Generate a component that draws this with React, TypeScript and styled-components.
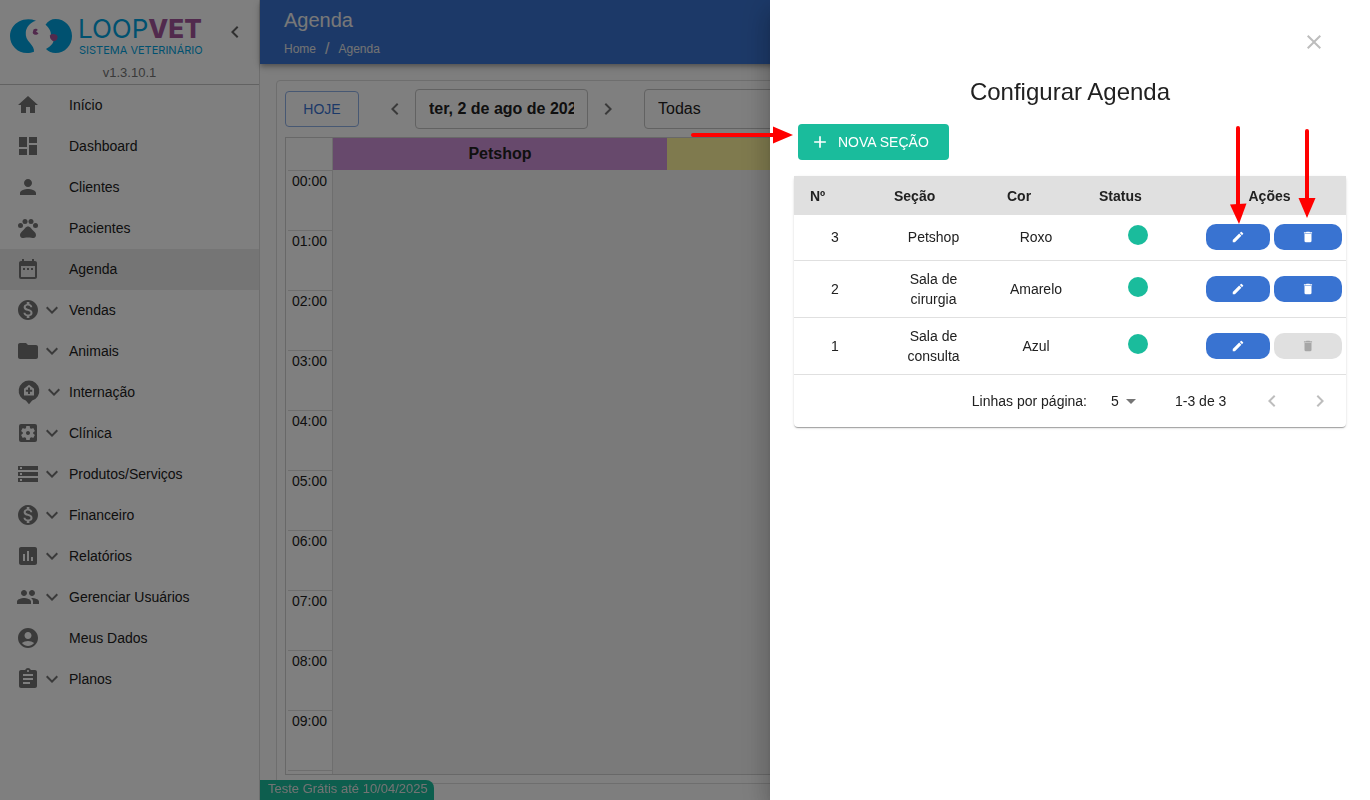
import React from 'react';
import styled, { createGlobalStyle } from 'styled-components';
import type { IconType } from 'react-icons';
import {
  MdAccountCircle,
  MdAdd,
  MdArrowDropDown,
  MdAssessment,
  MdAssignment,
  MdChevronLeft,
  MdChevronRight,
  MdClose,
  MdDashboard,
  MdDateRange,
  MdDelete,
  MdEdit,
  MdExpandMore,
  MdFolder,
  MdHome,
  MdMonetizationOn,
  MdPeople,
  MdPerson,
  MdPets,
  MdSettingsApplications,
  MdStorage,
} from 'react-icons/md';

const GlobalStyle = createGlobalStyle`
  * { box-sizing: border-box; }
  body {
    margin: 0;
    background: #fcfcfc;
    color: #212121;
    font-family: "Liberation Sans", Arial, sans-serif;
    font-size: 14px;
    line-height: 20px;
  }
  button, input, select { font: inherit; color: inherit; }
  button { border: 0; padding: 0; background: none; cursor: pointer; }
  a { color: inherit; text-decoration: none; }
  svg { display: block; flex-shrink: 0; }
`;

const Shell = styled.div`
  display: flex;
  height: 100vh;
  overflow: hidden;
`;

/* Sidebar */

const Sidebar = styled.aside`
  flex: 0 0 260px;
  background: #fff;
  border-right: 1px solid #dcdcdc;
`;

const Brand = styled.div`
  display: grid;
  grid-template-columns: 196px 1fr;
  grid-template-rows: 48px 16px;
  row-gap: 7px;
  align-items: start;
  height: 85px;
  padding: 10px 10px 0;
  border-bottom: 1px solid #c4c4c4;
`;

const CollapseButton = styled.button`
  display: grid;
  place-items: center;
  width: 28px;
  height: 44px;
  margin-left: 15px;
  color: #616161;
`;

const Version = styled.span`
  grid-column: 1 / -1;
  text-align: center;
  font-size: 13px;
  line-height: 16px;
  color: #757575;
`;

const NavLink = styled.a<{ $active?: boolean }>`
  display: flex;
  align-items: center;
  height: 41px;
  padding: 0 0 2px 16px;
  background: ${(p) => (p.$active ? '#ebebeb' : 'transparent')};
`;

const NavIcons = styled.span`
  display: flex;
  align-items: center;
  width: 53px;
  color: #757575;
`;

/* Main area */

const Main = styled.div`
  flex: 1;
  min-width: 0;
  display: flex;
  flex-direction: column;
`;

const AppBar = styled.header`
  height: 64px;
  padding: 8px 24px;
  background: #3973d1;
  color: #fff;
  box-shadow: 0 2px 4px -1px rgba(0, 0, 0, 0.2), 0 4px 5px rgba(0, 0, 0, 0.14),
    0 1px 10px rgba(0, 0, 0, 0.12);
`;

const AppTitle = styled.h1`
  margin: 0;
  font-size: 20px;
  font-weight: 400;
  line-height: 24px;
  color: #f0f0f0;
`;

const Breadcrumb = styled.nav`
  display: flex;
  align-items: center;
  gap: 9px;
  height: 33px;
  font-size: 12px;
  color: #e6e6e6;
`;

const Slash = styled.span`
  font-size: 16px;
`;

const Card = styled.section`
  flex: 1;
  min-height: 0;
  display: flex;
  flex-direction: column;
  gap: 8px;
  margin: 16px;
  padding: 8px;
  background: #fff;
  border: 1px solid #dcdcdc;
  border-radius: 4px;
`;

const Toolbar = styled.div`
  display: flex;
  align-items: center;
  height: 40px;
`;

const TodayButton = styled.button`
  width: 74px;
  height: 36px;
  margin-right: 16px;
  border: 1px solid #8fb0e6;
  border-radius: 4px;
  color: #3973d1;
`;

const StepButton = styled.button`
  display: grid;
  place-items: center;
  width: 40px;
  height: 40px;
  color: #757575;
`;

const DateInput = styled.input`
  width: 173px;
  height: 40px;
  padding: 0 13px;
  border: 1px solid #c4c4c4;
  border-radius: 4px;
  background: transparent;
  font-size: 16px;
  font-weight: 700;
`;

const RoomSelect = styled.select`
  appearance: none;
  width: 240px;
  height: 40px;
  margin-left: 16px;
  padding: 0 13px;
  border: 1px solid #c4c4c4;
  border-radius: 4px;
  background: transparent;
  font-size: 16px;
`;

const Calendar = styled.div`
  flex: 1;
  min-height: 0;
  overflow: hidden;
  display: grid;
  grid-template-columns: 47px repeat(3, 1fr);
  grid-template-rows: 32px 1fr;
  padding-right: 9px;
  border: 1px solid #d0d0d0;
`;

const RoomHead = styled.div<{ $tone: string }>`
  display: grid;
  place-items: center;
  background: ${(p) => p.$tone};
  font-size: 16px;
  font-weight: 700;
`;

const Corner = styled.div`
  border-right: 1px solid #dcdcdc;
`;

const Hours = styled.div`
  padding-left: 2px;
  border-right: 1px solid #dcdcdc;
`;

const Hour = styled.div`
  height: 60px;
  padding-right: 5px;
  border-top: 1px solid #dcdcdc;
  text-align: right;
`;

const Lane = styled.div`
  background: #f5f5f5;
`;

const TrialBadge = styled.div`
  position: fixed;
  left: 260px;
  bottom: 0;
  width: 174px;
  height: 20px;
  padding-left: 8px;
  border-radius: 0 8px 0 0;
  background: #1abc9c;
  color: #e6e6e6;
  font-size: 13px;
  line-height: 18px;
`;

/* Drawer */

const Backdrop = styled.div`
  position: fixed;
  inset: 0;
  background: rgba(0, 0, 0, 0.5);
`;

const Drawer = styled.div`
  position: fixed;
  top: 0;
  right: 0;
  bottom: 0;
  width: 600px;
  max-width: 100vw;
  display: flex;
  flex-direction: column;
  padding: 18px 24px 24px;
  background: #fff;
  box-shadow: 0 8px 10px -5px rgba(0, 0, 0, 0.2), 0 16px 24px 2px rgba(0, 0, 0, 0.14),
    0 6px 30px 5px rgba(0, 0, 0, 0.12);
`;

const CloseButton = styled.button`
  display: grid;
  place-items: center;
  align-self: flex-end;
  width: 48px;
  height: 48px;
  margin-right: 8px;
  color: #bdbdbd;
`;

const DrawerTitle = styled.h2`
  margin: 10px 0 16px;
  text-align: center;
  font-size: 24px;
  font-weight: 400;
  line-height: 32px;
`;

const NewButton = styled.button`
  display: flex;
  align-items: center;
  gap: 8px;
  width: 151px;
  height: 36px;
  margin: 0 0 16px 4px;
  padding-left: 12px;
  border-radius: 4px;
  background: #1abc9c;
  color: #fff;
`;

const Paper = styled.div`
  border-radius: 4px;
  background: #fff;
  box-shadow: 0 2px 1px -1px rgba(0, 0, 0, 0.2), 0 1px 1px rgba(0, 0, 0, 0.14),
    0 1px 3px rgba(0, 0, 0, 0.12);
`;

const Table = styled.table`
  width: 100%;
  table-layout: fixed;
  border-collapse: collapse;
`;

const Th = styled.th<{ $width?: number; $center?: boolean }>`
  width: ${(p) => (p.$width ? `${p.$width}px` : 'auto')};
  height: 39px;
  padding: 0 0 0 ${(p) => (p.$center ? 0 : 16)}px;
  background: #e0e0e0;
  text-align: ${(p) => (p.$center ? 'center' : 'left')};
`;

const Td = styled.td`
  height: 45px;
  padding: 8px 17px 8px 15px;
  border-bottom: 1px solid #e0e0e0;
  text-align: center;
`;

const StatusTd = styled(Td)`
  padding: 8px 16px;
`;

const ActionsTd = styled(Td)`
  padding: 0 4px 0 0;
`;

const StatusDot = styled.span`
  display: block;
  width: 20px;
  height: 20px;
  margin: 0 auto 4px;
  border-radius: 50%;
  background: #1abc9c;
`;

const Actions = styled.div`
  display: flex;
  justify-content: flex-end;
  gap: 4px;
`;

const ActionButton = styled.button<{ $wide?: boolean }>`
  display: grid;
  place-items: center;
  width: ${(p) => (p.$wide ? 68 : 64)}px;
  height: 26px;
  border-radius: 10px;
  background: #3973d1;
  color: #fff;
  &:disabled {
    background: #e0e0e0;
    color: #a6a6a6;
    cursor: default;
  }
`;

const Pagination = styled.div`
  display: flex;
  align-items: center;
  justify-content: flex-end;
  height: 52px;
  padding-right: 2px;
`;

const PageSize = styled.span`
  position: relative;
  display: flex;
  align-items: center;
  width: 40px;
  margin: 0 32px 0 16px;
  svg {
    position: absolute;
    right: 0;
    color: #757575;
    pointer-events: none;
  }
`;

const PageSizeSelect = styled.select`
  appearance: none;
  width: 100%;
  height: 24px;
  padding: 0 8px;
  border: 0;
  background: transparent;
`;

const Range = styled.span`
  min-width: 53px;
  margin-right: 20px;
`;

const PageButton = styled.button`
  display: grid;
  place-items: center;
  width: 48px;
  height: 48px;
  color: #bdbdbd;
`;

/* Red pointers drawn over the drawer */

const Pointer = styled.svg<{ $left: number; $top: number }>`
  position: absolute;
  left: ${(p) => p.$left}px;
  top: ${(p) => p.$top}px;
  pointer-events: none;
`;

const HospitalPin = ({ size = 26 }: { size?: number | string }) => (
  <svg width={size} height={size} viewBox="0 0 26 26" fill="currentColor">
    <path
      fillRule="evenodd"
      d="M13 1.5a10.3 10.3 0 0 1 3.2 20.1L13 25.3l-3.2-3.7A10.3 10.3 0 0 1 13 1.5zM13 5.8l-5 4v6.700h10v-6.700zM12 8.500h2v2.200h2.200v2H14V15h-2v-2.300H9.800v-2H12z"
    />
  </svg>
);

const Logo = () => (
  <svg width="196" height="48" viewBox="10 10 196 48" role="img" aria-label="LoopVet">
    <path
      fill="#00a3e0"
      d="M36 20.700C30 18.500 24 19 19 21.400C13.500 24.200 10 29.800 10 36C10 45.500 17.500 53 27 53C29.500 53 32 52.600 34 51.700C34.300 48.500 32.500 46 30 43C26.800 39.500 25.400 36.500 25.800 32C26.300 27.500 29.500 22.500 36 20.700Z"
    />
    <path
      fill="#00a3e0"
      d="M45.500 24.800C48 21 51.500 19 55.500 19C65 19 72 26.600 72 36C72 45.500 64.800 53 55.500 53C51.800 53 48.500 51.600 46 49C49 47.300 52.500 45 53.500 41L50.500 36.500C52 33 49.500 28 45.500 24.800Z"
    />
    <path fill="#a3559b" d="M50 35.500C51.500 33.300 56.500 33.700 57.500 36.200C58 38.800 56.500 41 53.800 41.300C51.300 40.500 49.500 37.800 50 35.500Z" />
    <path fill="#a3559b" d="M33.500 29.600C35 28.300 37 28.600 37.800 30L36 31.500L38.500 33.300C37 35.600 33.500 35.300 32.700 32.800Z" />
    <text x="78" y="38" fontFamily="Inter, sans-serif" fontSize="26" fill="#00a3e0">
      LOOP
      <tspan fontWeight="800" fill="#a3559b">
        VET
      </tspan>
    </text>
    <text x="79" y="54" fontFamily="Inter, sans-serif" fontSize="11" fill="#00a3e0">
      SISTEMA VETERINÁRIO
    </text>
  </svg>
);

type NavEntry = { label: string; icon: IconType | typeof HospitalPin; expands?: boolean; size?: number };

const navEntries: NavEntry[] = [
  { label: 'Início', icon: MdHome },
  { label: 'Dashboard', icon: MdDashboard },
  { label: 'Clientes', icon: MdPerson },
  { label: 'Pacientes', icon: MdPets },
  { label: 'Agenda', icon: MdDateRange },
  { label: 'Vendas', icon: MdMonetizationOn, expands: true },
  { label: 'Animais', icon: MdFolder, expands: true },
  { label: 'Internação', icon: HospitalPin, expands: true, size: 26 },
  { label: 'Clínica', icon: MdSettingsApplications, expands: true },
  { label: 'Produtos/Serviços', icon: MdStorage, expands: true },
  { label: 'Financeiro', icon: MdMonetizationOn, expands: true },
  { label: 'Relatórios', icon: MdAssessment, expands: true },
  { label: 'Gerenciar Usuários', icon: MdPeople, expands: true },
  { label: 'Meus Dados', icon: MdAccountCircle },
  { label: 'Planos', icon: MdAssignment, expands: true },
];

const hours = ['00:00', '01:00', '02:00', '03:00', '04:00', '05:00', '06:00', '07:00', '08:00', '09:00', ''];

const sections = [
  { id: 3, name: 'Petshop', color: 'Roxo', removable: true },
  { id: 2, name: 'Sala de cirurgia', color: 'Amarelo', removable: true },
  { id: 1, name: 'Sala de consulta', color: 'Azul', removable: false },
];

export default function App() {
  return (
    <>
      <GlobalStyle />
      <Shell>
        <Sidebar>
          <Brand>
            <Logo />
            <CollapseButton aria-label="Recolher menu">
              <MdChevronLeft size={24} />
            </CollapseButton>
            <Version>v1.3.10.1</Version>
          </Brand>
          <nav>
            {navEntries.map(({ label, icon: Icon, expands, size = 24 }) => (
              <NavLink key={label} href="#" $active={label === 'Agenda'}>
                <NavIcons>
                  <Icon size={size} />
                  {expands && <MdExpandMore size={24} />}
                </NavIcons>
                {label}
              </NavLink>
            ))}
          </nav>
        </Sidebar>

        <Main>
          <AppBar>
            <AppTitle>Agenda</AppTitle>
            <Breadcrumb>
              <a href="#">Home</a>
              <Slash>/</Slash>
              <a href="#">Agenda</a>
            </Breadcrumb>
          </AppBar>
          <Card>
            <Toolbar>
              <TodayButton>HOJE</TodayButton>
              <StepButton aria-label="Dia anterior">
                <MdChevronLeft size={24} />
              </StepButton>
              <DateInput aria-label="Data" defaultValue="ter, 2 de ago de 2022" />
              <StepButton aria-label="Próximo dia">
                <MdChevronRight size={24} />
              </StepButton>
              <RoomSelect aria-label="Seção">
                <option>Todas</option>
              </RoomSelect>
            </Toolbar>
            <Calendar>
              <Corner />
              <RoomHead $tone="#ce93d8">Petshop</RoomHead>
              <RoomHead $tone="#fff59d" />
              <RoomHead $tone="#90caf9" />
              <Hours>
                {hours.map((hour) => (
                  <Hour key={hour}>{hour}</Hour>
                ))}
              </Hours>
              <Lane />
              <Lane />
              <Lane />
            </Calendar>
          </Card>
        </Main>
      </Shell>
      <TrialBadge>Teste Grátis até 10/04/2025</TrialBadge>

      <Backdrop />
      <Drawer role="dialog" aria-labelledby="drawer-title">
        <CloseButton aria-label="Fechar">
          <MdClose size={24} />
        </CloseButton>
        <DrawerTitle id="drawer-title">Configurar Agenda</DrawerTitle>
        <NewButton>
          <MdAdd size={20} />
          NOVA SEÇÃO
        </NewButton>
        <Paper>
          <Table>
            <thead>
              <tr>
                <Th $width={84}>Nº</Th>
                <Th $width={113}>Seção</Th>
                <Th $width={92}>Cor</Th>
                <Th $width={110}>Status</Th>
                <Th $center>Ações</Th>
              </tr>
            </thead>
            <tbody>
              {sections.map((section) => (
                <tr key={section.id}>
                  <Td>{section.id}</Td>
                  <Td>{section.name}</Td>
                  <Td>{section.color}</Td>
                  <StatusTd>
                    <StatusDot role="img" aria-label="Ativo" />
                  </StatusTd>
                  <ActionsTd>
                    <Actions>
                      <ActionButton aria-label="Editar">
                        <MdEdit size={14} />
                      </ActionButton>
                      <ActionButton $wide aria-label="Excluir" disabled={!section.removable}>
                        <MdDelete size={14} />
                      </ActionButton>
                    </Actions>
                  </ActionsTd>
                </tr>
              ))}
            </tbody>
          </Table>
          <Pagination>
            <label htmlFor="page-size">Linhas por página:</label>
            <PageSize>
              <PageSizeSelect id="page-size">
                <option>5</option>
              </PageSizeSelect>
              <MdArrowDropDown size={24} />
            </PageSize>
            <Range>1-3 de 3</Range>
            <PageButton aria-label="Página anterior" disabled>
              <MdChevronLeft size={24} />
            </PageButton>
            <PageButton aria-label="Próxima página" disabled>
              <MdChevronRight size={24} />
            </PageButton>
          </Pagination>
        </Paper>

        <Pointer $left={-79} $top={126} width="103" height="18">
          <path d="M2 9H84" stroke="#f00" strokeWidth="4" strokeLinecap="round" />
          <path d="M82 0.500V17.500L102 9Z" fill="#f00" />
        </Pointer>
        <Pointer $left={459} $top={126} width="18" height="99">
          <path d="M9 2V80" stroke="#f00" strokeWidth="4" strokeLinecap="round" />
          <path d="M1 78.500L17.500 77.500L10 98Z" fill="#f00" />
        </Pointer>
        <Pointer $left={528} $top={129} width="18" height="90">
          <path d="M9 2V72" stroke="#f00" strokeWidth="4" strokeLinecap="round" />
          <path d="M0.500 69H17.500L9 89Z" fill="#f00" />
        </Pointer>
      </Drawer>
    </>
  );
}
